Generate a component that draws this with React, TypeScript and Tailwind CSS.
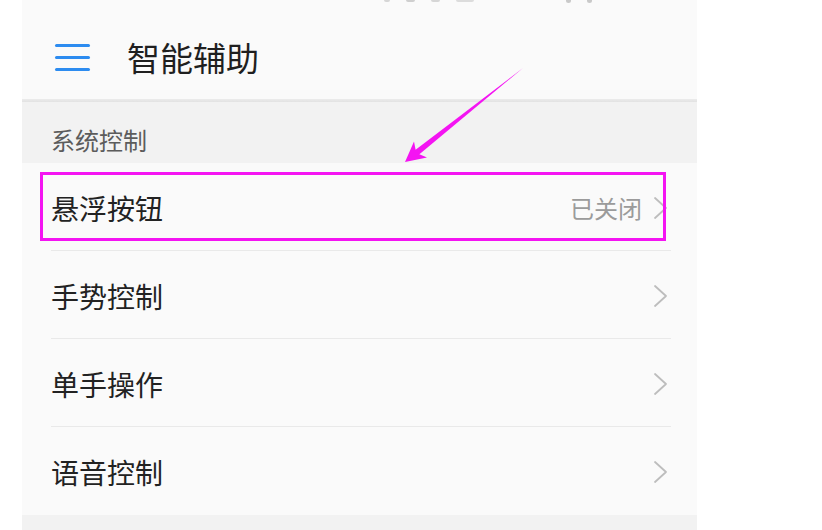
import React from 'react';

const font = { fontFamily: '"Noto Sans CJK SC", "Noto Sans", sans-serif' };

interface RowProps {
    label: string;
    value?: string;
    last?: boolean;
}

function Chevron() {
    return (
        <svg width="15" height="24" viewBox="0 0 15 24" fill="none">
            <polyline points="2,2 13,12 2,22" stroke="#bdbdbd" strokeWidth="1.8" strokeLinecap="round" strokeLinejoin="round" />
        </svg>
    );
}

function SettingRow({ label, value, last }: RowProps) {
    return (
        <div className="h-[88px] pl-[29px] pr-[26px]">
            <div className={`h-full flex items-center pt-[2px] ${last ? '' : 'border-b border-[#e9e9e9]'}`}>
                <span className="flex-1 text-[28px] leading-none text-[#222]">{label}</span>
                {value && <span className="text-[24px] leading-none text-[#9b9b9b] mr-[11px]">{value}</span>}
                <div className="mr-[3px] flex items-center">
                    <Chevron />
                </div>
            </div>
        </div>
    );
}

export default function App() {
    const rows: RowProps[] = [
        { label: '悬浮按钮', value: '已关闭' },
        { label: '手势控制' },
        { label: '单手操作' },
        { label: '语音控制', last: true },
    ];

    return (
        <div className="relative w-[822px] h-[530px] bg-white overflow-hidden" style={font}>
            <div className="ml-[22px] w-[675px] h-full bg-[#fafafa] flex flex-col">
                {/* status bar leftovers, cut off at the top */}
                <div className="h-0 flex items-start">
                    <div className="ml-[362px] flex gap-[16px]">
                        <div className="w-[6px] h-[2px] rounded-b-full bg-[#d6d6d6]" />
                        <div className="w-[9px] h-[2px] rounded-b-full bg-[#cfcfcf]" />
                        <div className="w-[9px] h-[2px] rounded-b-full bg-[#d6d6d6]" />
                        <div className="w-[18px] h-[2px] rounded-b-full bg-[#dcdcdc]" />
                        <div className="ml-[76px] w-[5px] h-[3px] rounded-b-full bg-[#c9c9c9]" />
                        <div className="w-[5px] h-[3px] rounded-b-full bg-[#c9c9c9]" />
                    </div>
                </div>

                {/* header */}
                <div className="h-[99px] flex items-center pt-[16px] pl-[33px]">
                    <div className="w-[35px] flex flex-col gap-[9px]">
                        <div className="h-[3px] rounded-full bg-[#2d8cf0]" />
                        <div className="h-[3px] rounded-full bg-[#2d8cf0]" />
                        <div className="h-[3px] rounded-full bg-[#2d8cf0]" />
                    </div>
                    <h1 className="ml-[37px] text-[33px] leading-none text-[#1f1f1f]">智能辅助</h1>
                </div>
                <div className="h-[3px] bg-gradient-to-b from-[#ececec] to-[#e2e2e2]" />

                {/* section */}
                <div className="h-[61px] bg-[#f2f2f2] flex items-center pt-[15px] pl-[29px]">
                    <span className="text-[24px] leading-none text-[#5c5c5c]">系统控制</span>
                </div>

                {rows.map(r => (
                    <SettingRow key={r.label} {...r} />
                ))}

                <div className="flex-1 bg-[#f2f2f2]" />
            </div>

            {/* annotation: highlight box */}
            <div className="absolute left-[40px] top-[172px] w-[626px] h-[69px] border-[3px] border-[#f414f2]" />

            {/* annotation: arrow */}
            <svg className="absolute inset-0 pointer-events-none" width="822" height="530" viewBox="0 0 822 530">
                <polygon
                    points="405,162 414,141.5 415.6,149.7 523,68 419.4,154.3 427,157.5"
                    fill="#f414f2"
                />
            </svg>
        </div>
    );
}
